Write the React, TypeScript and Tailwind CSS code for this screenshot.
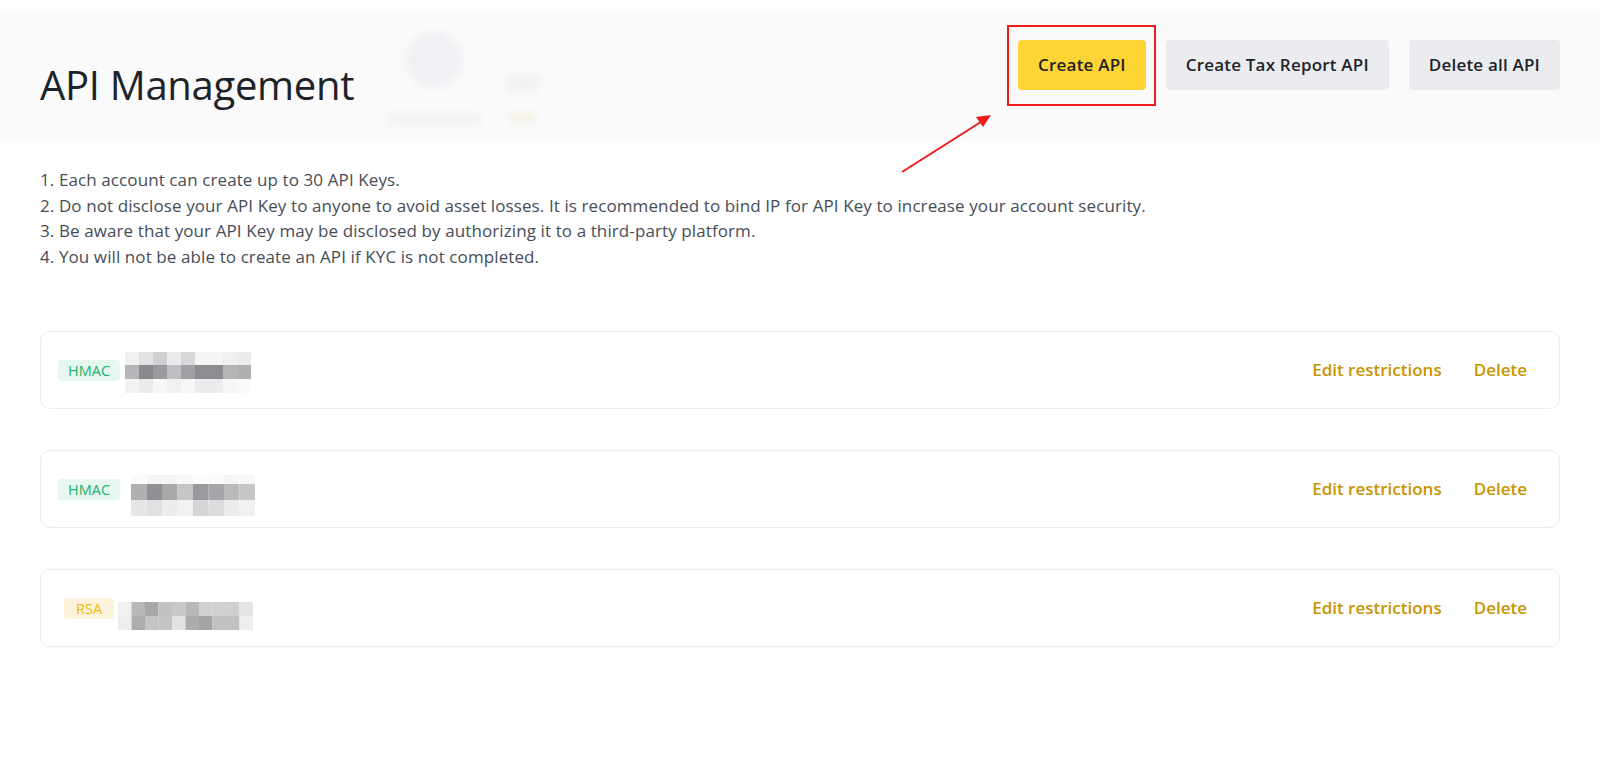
import React from "react";

const notes = [
  "1. Each account can create up to 30 API Keys.",
  "2. Do not disclose your API Key to anyone to avoid asset losses. It is recommended to bind IP for API Key to increase your account security.",
  "3. Be aware that your API Key may be disclosed by authorizing it to a third-party platform.",
  "4. You will not be able to create an API if KYC is not completed.",
];

type MosaicProps = { cell: number; rows: { h: number; c: string[] }[] };

// pixelated key, drawn as blocks
function Mosaic({ cell, rows }: MosaicProps) {
  const w = cell * rows[0].c.length;
  const h = rows.reduce((s, r) => s + r.h, 0);
  let y = 0;
  return (
    <svg width={w} height={h} viewBox={`0 0 ${w} ${h}`} className="block shrink-0">
      {rows.map((r, ri) => {
        const top = y;
        y += r.h;
        return r.c.map((c, ci) => <rect key={`${ri}-${ci}`} x={ci * cell} y={top} width={cell} height={r.h} fill={c} />);
      })}
    </svg>
  );
}

const keys = [
  {
    type: "HMAC",
    badge: "bg-[#e6f7ef] text-[#20b26c] px-[10px]",
    mosaicClass: "ml-[5px] mt-[5px]",
    cell: 14,
    rows: [
      { h: 13, c: ["#f0f0f2", "#e2e2e4", "#d0d0d2", "#ebebed", "#d8d8da", "#f5f5f5", "#f5f5f5", "#f0f0f2", "#ececec"] },
      { h: 14, c: ["#b6b6b8", "#88898d", "#9a9b9f", "#bfbfc1", "#a0a0a4", "#8c8d91", "#8c8d91", "#b5b5b8", "#b0b0b3"] },
      { h: 14, c: ["#f2f2f2", "#ebebed", "#f7f7f7", "#f0f0f0", "#f7f7f7", "#ececee", "#ececee", "#f7f7f7", "#fafafa"] },
    ],
  },
  {
    type: "HMAC",
    badge: "bg-[#e6f7ef] text-[#20b26c] px-[10px]",
    mosaicClass: "ml-[11px] mt-[12px]",
    cell: 15.5,
    rows: [
      { h: 9, c: ["#fafafa", "#f5f5f5", "#f5f5f5", "#f7f7f7", "#fcfcfc", "#fafafa", "#f5f5f5", "#f7f7f7"] },
      { h: 16, c: ["#b0b0b2", "#909094", "#a8a8aa", "#c6c6c8", "#9a9a9e", "#a6a6aa", "#bbbbbd", "#c6c6c8"] },
      { h: 16, c: ["#e6e6e8", "#e0e0e2", "#ececee", "#f2f2f2", "#d5d5d7", "#dcdcde", "#ececee", "#f0f0f2"] },
    ],
  },
  {
    type: "RSA",
    badge: "bg-[#fdf3dd] text-[#f0b90b] px-[12px] ml-[6px]",
    mosaicClass: "ml-[4px] mt-[16px]",
    cell: 13.5,
    rows: [
      { h: 14, c: ["#f0f0f0", "#b8b8ba", "#a8a8aa", "#c2c2c4", "#c8c8ca", "#b8b8ba", "#d0d0d2", "#d0d0d2", "#cfcfd1", "#e4e4e6"] },
      { h: 14, c: ["#ededed", "#acacae", "#c4c4c6", "#c4c4c6", "#e2e2e2", "#acacae", "#a4a4a6", "#c0c0c2", "#c0c0c2", "#ededed"] },
    ],
  },
];

export default function App() {
  return (
    <div className="relative min-h-screen bg-white pt-[9px] text-[#1e2329]" style={{ fontFamily: "'Open Sans', 'Noto Sans', sans-serif" }}>
      {/* Header */}
      <header className="relative h-[132px] bg-[#fafafa] px-10 flex justify-between">
        {/* blurred leftovers behind the title */}
        <div className="absolute left-[406px] top-[23px] w-[56px] h-[56px] rounded-full bg-[#eef0f3] blur-[3px]" />
        <div className="absolute left-[506px] top-[66px] w-[34px] h-[16px] rounded-full bg-[#f0f1f3] blur-[3px]" />
        <div className="absolute left-[388px] top-[104px] w-[94px] h-[12px] rounded bg-[#f3f3f4] blur-[3px]" />
        <div className="absolute left-[510px] top-[104px] w-[26px] h-[10px] rounded bg-[#f5f1e8] blur-[3px]" />

        <h1 className="relative mt-[52px] text-[40px] leading-[48px] font-normal tracking-[-0.3px] text-[#1e2329]">API Management</h1>

        <div className="flex gap-5 pt-[31px] items-start">
          <div className="relative">
            <button className="h-[50px] px-[20px] rounded-[4px] bg-[#fcd535] text-[17px] tracking-[0.2px] font-semibold text-[#1e2329]">Create API</button>
            <div className="absolute -left-[11px] -right-[10px] -top-[15px] -bottom-[16px] border-2 border-[#f01a1a] pointer-events-none" />
          </div>
          <button className="h-[50px] px-[20px] rounded-[4px] bg-[#eaecef] text-[17px] tracking-[0.2px] font-semibold text-[#1e2329]">Create Tax Report API</button>
          <button className="h-[50px] px-[20px] rounded-[4px] bg-[#eaecef] text-[17px] tracking-[0.2px] font-semibold text-[#1e2329]">Delete all API</button>
        </div>
      </header>

      {/* Arrow annotation */}
      <svg className="absolute left-[896px] top-[108px] pointer-events-none" width="104" height="72" viewBox="0 0 104 72">
        <line x1="6" y1="64" x2="88" y2="12" stroke="#f01a1a" strokeWidth="2" />
        <polygon points="95,7 80,9 87,19" fill="#f01a1a" />
      </svg>

      {/* Notes */}
      <div className="px-10 mt-[26px]">
        {notes.map((n) => (
          <p key={n} className="text-[17px] leading-[25.5px] tracking-[0.1px] text-[#474d57]">{n}</p>
        ))}
      </div>

      {/* Keys */}
      <div className="px-10 mt-[62px] flex flex-col gap-[41px]">
        {keys.map((k, i) => (
          <div key={i} className="h-[78px] rounded-[10px] border border-[#eaecef] pl-[17px] pr-8 flex items-center justify-between">
            <div className="flex items-center">
              <span className={`h-[21px] rounded-[4px] text-[14.5px] leading-[21px] ${k.badge}`}>{k.type}</span>
              <div className={k.mosaicClass}>
                <Mosaic cell={k.cell} rows={k.rows} />
              </div>
            </div>
            <div className="flex items-center gap-8 text-[17px] font-semibold text-[#c99400]">
              <a href="#">Edit restrictions</a>
              <a href="#">Delete</a>
            </div>
          </div>
        ))}
      </div>
    </div>
  );
}
